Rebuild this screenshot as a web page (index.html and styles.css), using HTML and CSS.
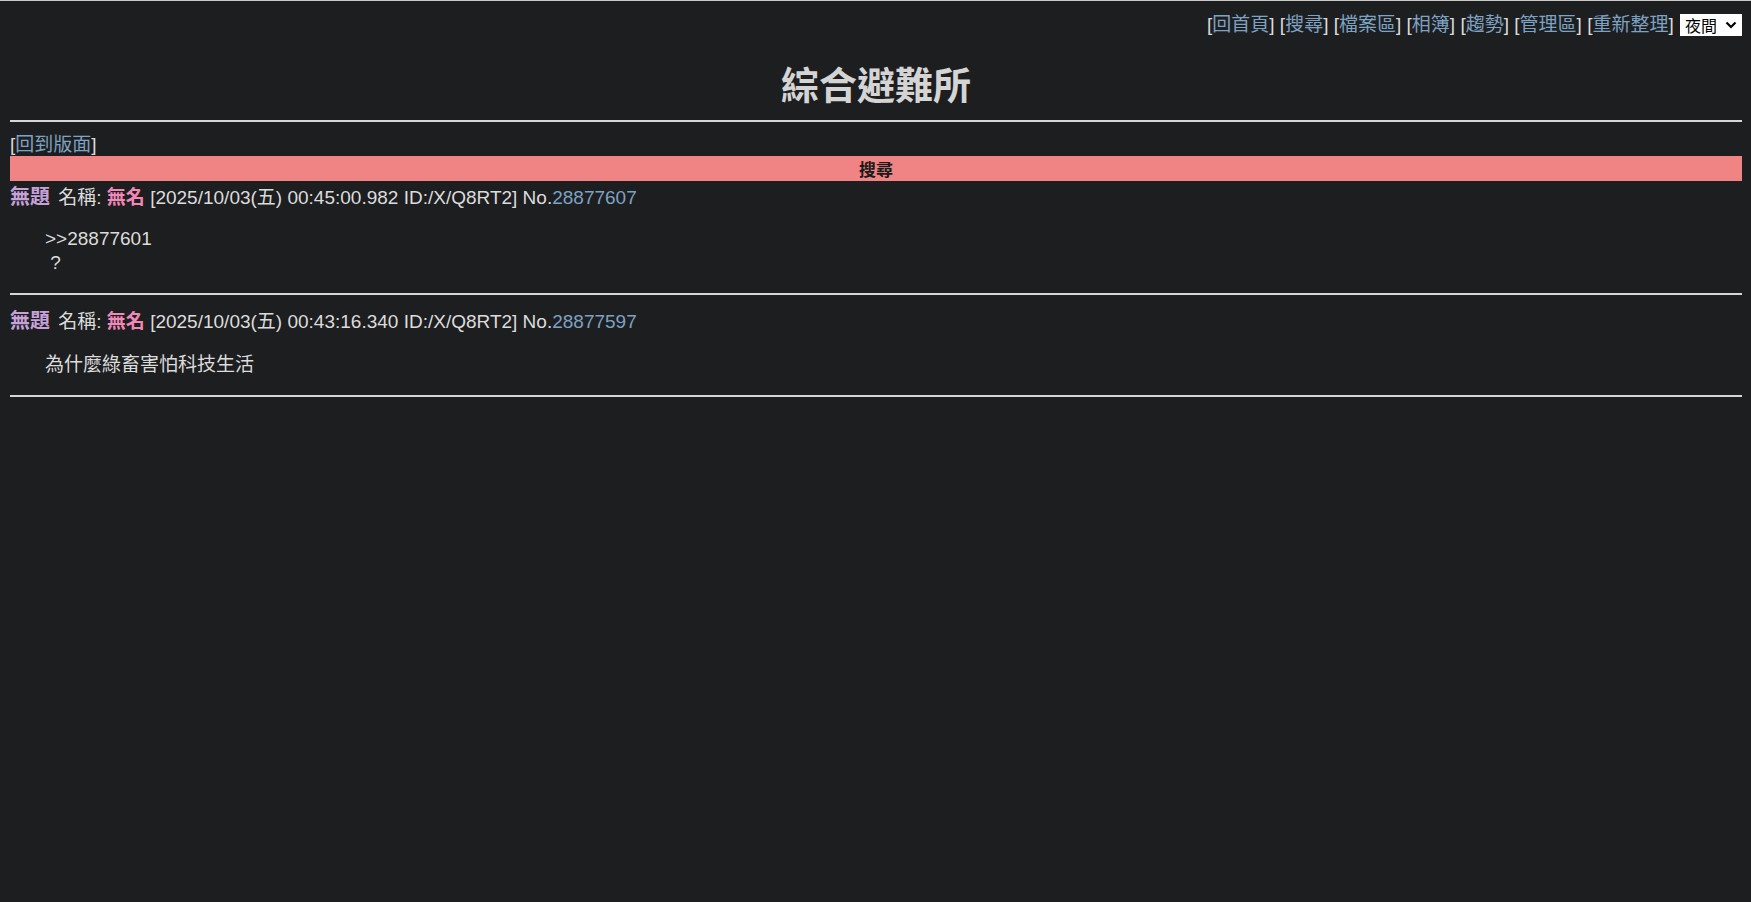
FILE: index.html
```html
<!DOCTYPE html>
<html lang="zh-Hant">
<head>
<meta charset="utf-8">
<title>綜合避難所</title>
<link rel="stylesheet" href="styles.css">
</head>
<body>
<div class="toplinks">[<a href="#">回首頁</a>] [<a href="#">搜尋</a>] [<a href="#">檔案區</a>] [<a href="#">相簿</a>] [<a href="#">趨勢</a>] [<a href="#">管理區</a>] [<a href="#">重新整理</a>] <select class="theme"><option>夜間</option><option>日間</option></select></div>
<h1 class="title">綜合避難所</h1>
<hr class="rule">
<div class="back">[<a href="#">回到版面</a>]</div>
<div class="bar">搜尋</div>

<div class="post first">
  <div class="head"><span class="subject">無題</span> 名稱: <span class="name">無名</span> [2025/10/03(五) 00:45:00.982 ID:/X/Q8RT2] No.<a href="#">28877607</a></div>
  <div class="body">&gt;&gt;28877601<br>&nbsp;?</div>
</div>
<hr class="rule">
<div class="post second">
  <div class="head"><span class="subject">無題</span> 名稱: <span class="name">無名</span> [2025/10/03(五) 00:43:16.340 ID:/X/Q8RT2] No.<a href="#">28877597</a></div>
  <div class="body">為什麼綠畜害怕科技生活</div>
</div>
<hr class="rule">
</body>
</html>
```

FILE: styles.css
```css
html {
  background: #1d1e20;
  border-top: 1px solid #c8c8c8;
}
body {
  margin: 13px 9px 0 10px;
  color: #dcdcdc;
  font-family: "Liberation Sans", Arial, "Noto Sans CJK TC", sans-serif;
  font-size: 19px;
  line-height: 22px;
}
a {
  color: #7ea2c2;
  text-decoration: none;
}
.toplinks {
  text-align: right;
  height: 22px;
  line-height: 22px;
}
.theme {
  -webkit-appearance: none;
  appearance: none;
  vertical-align: middle;
  margin: -2px 0 0 1px;
  width: 62px;
  height: 22px;
  font-family: "Noto Sans CJK TC", sans-serif;
  font-size: 16px;
  line-height: 20px;
  background-color: #fff;
  background-image: url("data:image/svg+xml,%3Csvg xmlns='http://www.w3.org/2000/svg' width='12' height='8' viewBox='0 0 12 8'%3E%3Cpath d='M1.5 1.5 6 6l4.5-4.5' fill='none' stroke='%23000' stroke-width='2.2'/%3E%3C/svg%3E");
  background-repeat: no-repeat;
  background-position: right 4px center;
  color: #000;
  border: 1px solid #fff;
  border-radius: 0;
  padding: 0 0 0 4px;
}
.title {
  margin: 24px 0 14px;
  text-align: center;
  font-size: 38px;
  line-height: 46px;
  font-weight: bold;
  color: #d4d4d4;
  font-family: "Noto Sans CJK TC", sans-serif;
}
.rule {
  margin: 0;
  border: 0;
  height: 0;
  border-top: 2px solid #d6d6d6;
}
.back {
  margin-top: 12px;
}
.bar {
  height: 25px;
  line-height: 25px;
  background: #f08484;
  color: #1a1a1a;
  text-align: center;
  font-weight: bold;
  font-size: 17px;
  font-family: "Noto Sans CJK TC", sans-serif;
}
.post {
  margin-top: 5px;
  padding-bottom: 18px;
}
.post.second {
  margin-top: 15px;
  padding-bottom: 18px;
}
.subject {
  color: #c6a2d8;
  font-weight: bold;
  font-size: 20px;
  margin-right: 3px;
}
.name {
  color: #f088b8;
  font-weight: bold;
}
.body {
  margin-top: 18px;
  padding-left: 35px;
  line-height: 24px;
}
.second .body {
  margin-top: 20px;
}
```
